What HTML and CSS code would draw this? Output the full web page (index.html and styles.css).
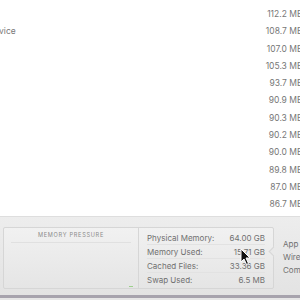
FILE: index.html
```html
<!DOCTYPE html>
<html lang="en">
<head>
<meta charset="utf-8"/>
<title>Activity Monitor - Memory</title>
<link rel="stylesheet" href="styles.css">
</head>
<body>
<div class="list">
  <div class="row"><span class="name"></span><span class="mem">113.0 MB</span></div>
  <div class="row"><span class="name"></span><span class="mem">112.2 MB</span></div>
  <div class="row"><span class="name clipped">CoreService</span><span class="mem">108.7 MB</span></div>
  <div class="row"><span class="name"></span><span class="mem">107.0 MB</span></div>
  <div class="row"><span class="name"></span><span class="mem">105.3 MB</span></div>
  <div class="row"><span class="name"></span><span class="mem">93.7 MB</span></div>
  <div class="row"><span class="name"></span><span class="mem">90.9 MB</span></div>
  <div class="row"><span class="name"></span><span class="mem">90.3 MB</span></div>
  <div class="row"><span class="name"></span><span class="mem">90.2 MB</span></div>
  <div class="row"><span class="name"></span><span class="mem">90.0 MB</span></div>
  <div class="row"><span class="name"></span><span class="mem">89.8 MB</span></div>
  <div class="row"><span class="name"></span><span class="mem">87.0 MB</span></div>
  <div class="row"><span class="name"></span><span class="mem">86.7 MB</span></div>
  <div class="row"><span class="name"></span><span class="mem">86.6 MB</span></div>
</div>

<div class="footer">
  <div class="panel">
    <div class="pressure">
      <div class="pressure-title">MEMORY PRESSURE</div>
      <div class="pressure-graph"><span class="green-tick"></span></div>
    </div>
    <div class="stats">
      <div class="stat"><span>Physical Memory:</span><span>64.00 GB</span></div>
      <div class="stat"><span>Memory Used:</span><span>15.71 GB</span></div>
      <div class="stat"><span>Cached Files:</span><span>33.36 GB</span></div>
      <div class="stat"><span>Swap Used:</span><span>6.5 MB</span></div>
    </div>
  </div>
  <div class="breakdown">
    <div>App Memory:</div>
    <div>Wired Memory:</div>
    <div>Compressed:</div>
  </div>
  <svg class="cursor" width="12" height="18" viewBox="0 0 12 18">
    <path d="M1 1 L1 14 L4 11 L6.5 16.5 L8.5 15.5 L6 10 L10 10 Z" fill="#111" stroke="#fff" stroke-width="1"/>
  </svg>
</div>
</body>
</html>
```
FILE: styles.css
```css
body {
  margin: 0;
  width: 300px;
  height: 300px;
  overflow: hidden;
  font-family: 'Inter', 'Liberation Sans', sans-serif;
  background-color: #e6e6e6;
}

.list {
  height: 216px;
  overflow: hidden;
  background-color: #fff;
  border-bottom: 1px solid #dedede;
}

.row {
  display: flex;
  justify-content: space-between;
  align-items: center;
  height: 17.3px;
  width: 302.5px;
  font-size: 8.5px;
  color: #777;
}

.row:first-child {
  margin-top: -12px;
}

.name.clipped {
  margin-left: -34px;
}

.footer {
  position: relative;
  height: 81px;
  padding: 10px 0 0 3px;
  box-sizing: border-box;
  display: flex;
  overflow: hidden;
  background: linear-gradient(#ededed, #e3e3e3);
  border-bottom: 3px solid #a7a3ad;
}

.panel {
  display: flex;
  flex-shrink: 0;
  width: 271px;
  height: 62px;
  border: 1px solid #d6d6d6;
  border-radius: 2px;
  background: linear-gradient(#f1f1f1, #e5e5e5);
  box-sizing: border-box;
  position: relative;
}

.panel::after {
  content: "";
  position: absolute;
  right: -4px;
  top: 20px;
  width: 6px;
  height: 6px;
  background: #e9e9e9;
  border-left: 1px solid #d6d6d6;
  border-bottom: 1px solid #d6d6d6;
  transform: rotate(45deg);
}

.pressure {
  width: 135px;
  flex-shrink: 0;
  border-right: 1px solid #d6d6d6;
  padding: 4px 7px 0;
  box-sizing: border-box;
}

.pressure-title {
  text-align: center;
  font-size: 5.6px;
  letter-spacing: 0.7px;
  color: #8a8a8a;
  padding-bottom: 4px;
  border-bottom: 1px solid #e0e0e0;
}

.pressure-graph {
  position: relative;
  height: 44px;
}

.green-tick {
  position: absolute;
  right: -2px;
  bottom: 0;
  width: 4px;
  height: 1px;
  background: #9ccf8c;
}

.stats {
  flex: 1;
  padding: 3px 8px 0 8px;
}

.stat {
  display: flex;
  justify-content: space-between;
  height: 14px;
  line-height: 14px;
  font-size: 8px;
  color: #707070;
  border-bottom: 1px solid #e2e2e2;
  box-sizing: border-box;
  white-space: nowrap;
}

.stat:last-child {
  border-bottom: none;
}

.breakdown {
  flex-shrink: 0;
  padding: 11px 0 0 9px;
  font-size: 8px;
  color: #707070;
  line-height: 13px;
  white-space: nowrap;
}

.cursor {
  position: absolute;
  left: 240px;
  top: 31px;
}
```
